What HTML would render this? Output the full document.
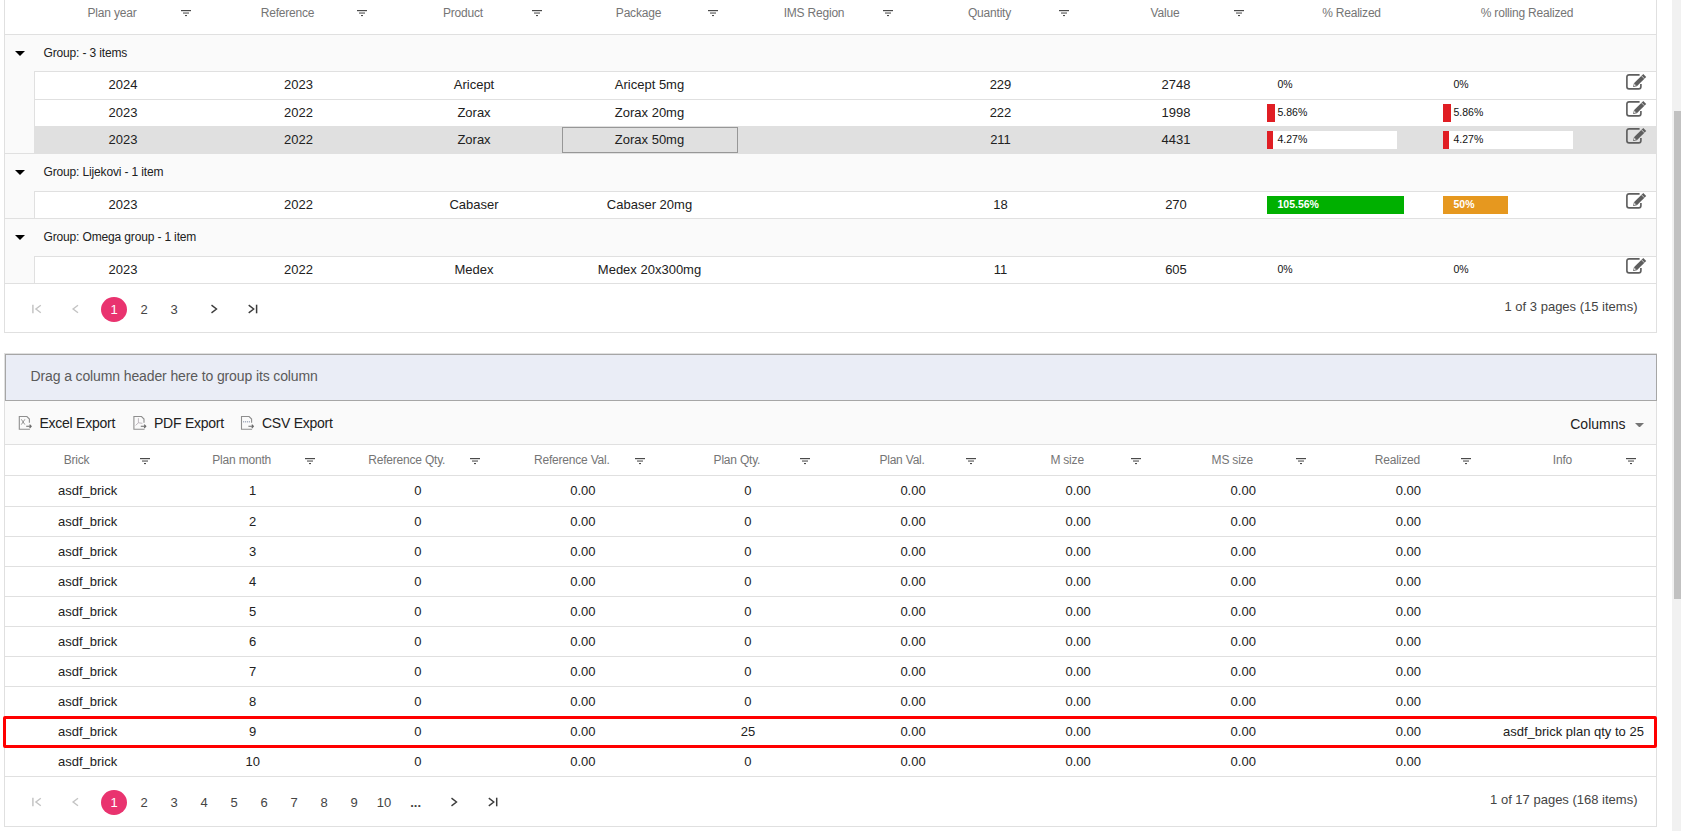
<!DOCTYPE html>
<html><head><meta charset="utf-8"><style>
html,body{margin:0;padding:0;background:#fff;}
body{width:1681px;height:831px;overflow:hidden;position:relative;font-family:"Liberation Sans", sans-serif;}
body>div,body>svg{position:absolute;}
.t{white-space:nowrap;}
</style></head><body>
<div style="left:4px;top:0px;width:1px;height:333px;background:#e0e0e0;"></div>
<div style="left:1656px;top:0px;width:1px;height:333px;background:#e0e0e0;"></div>
<div style="left:4px;top:332px;width:1653px;height:1px;background:#e0e0e0;"></div>
<div style="left:5px;top:34px;width:1651px;height:1px;background:#e0e0e0;"></div>
<div class="t" style="left:-88.00px;width:400px;text-align:center;top:0.84px;font-size:12px;line-height:24px;color:#757575;font-weight:normal;letter-spacing:-0.2px">Plan year</div>
<svg style="left:181.0px;top:10px" width="10" height="7" viewBox="0 0 10 7"><rect x="0" y="0" width="10" height="1.2" fill="#4a4a4a"/><rect x="2" y="2.4" width="6" height="1.3" fill="#6e6e6e"/><rect x="4" y="5" width="2" height="1.1" fill="#4a4a4a"/></svg>
<div class="t" style="left:87.50px;width:400px;text-align:center;top:0.84px;font-size:12px;line-height:24px;color:#757575;font-weight:normal;letter-spacing:-0.2px">Reference</div>
<svg style="left:356.5px;top:10px" width="10" height="7" viewBox="0 0 10 7"><rect x="0" y="0" width="10" height="1.2" fill="#4a4a4a"/><rect x="2" y="2.4" width="6" height="1.3" fill="#6e6e6e"/><rect x="4" y="5" width="2" height="1.1" fill="#4a4a4a"/></svg>
<div class="t" style="left:263.00px;width:400px;text-align:center;top:0.84px;font-size:12px;line-height:24px;color:#757575;font-weight:normal;letter-spacing:-0.2px">Product</div>
<svg style="left:532.0px;top:10px" width="10" height="7" viewBox="0 0 10 7"><rect x="0" y="0" width="10" height="1.2" fill="#4a4a4a"/><rect x="2" y="2.4" width="6" height="1.3" fill="#6e6e6e"/><rect x="4" y="5" width="2" height="1.1" fill="#4a4a4a"/></svg>
<div class="t" style="left:438.50px;width:400px;text-align:center;top:0.84px;font-size:12px;line-height:24px;color:#757575;font-weight:normal;letter-spacing:-0.2px">Package</div>
<svg style="left:707.5px;top:10px" width="10" height="7" viewBox="0 0 10 7"><rect x="0" y="0" width="10" height="1.2" fill="#4a4a4a"/><rect x="2" y="2.4" width="6" height="1.3" fill="#6e6e6e"/><rect x="4" y="5" width="2" height="1.1" fill="#4a4a4a"/></svg>
<div class="t" style="left:614.00px;width:400px;text-align:center;top:0.84px;font-size:12px;line-height:24px;color:#757575;font-weight:normal;letter-spacing:-0.2px">IMS Region</div>
<svg style="left:883.0px;top:10px" width="10" height="7" viewBox="0 0 10 7"><rect x="0" y="0" width="10" height="1.2" fill="#4a4a4a"/><rect x="2" y="2.4" width="6" height="1.3" fill="#6e6e6e"/><rect x="4" y="5" width="2" height="1.1" fill="#4a4a4a"/></svg>
<div class="t" style="left:789.50px;width:400px;text-align:center;top:0.84px;font-size:12px;line-height:24px;color:#757575;font-weight:normal;letter-spacing:-0.2px">Quantity</div>
<svg style="left:1058.5px;top:10px" width="10" height="7" viewBox="0 0 10 7"><rect x="0" y="0" width="10" height="1.2" fill="#4a4a4a"/><rect x="2" y="2.4" width="6" height="1.3" fill="#6e6e6e"/><rect x="4" y="5" width="2" height="1.1" fill="#4a4a4a"/></svg>
<div class="t" style="left:965.00px;width:400px;text-align:center;top:0.84px;font-size:12px;line-height:24px;color:#757575;font-weight:normal;letter-spacing:-0.2px">Value</div>
<svg style="left:1234.0px;top:10px" width="10" height="7" viewBox="0 0 10 7"><rect x="0" y="0" width="10" height="1.2" fill="#4a4a4a"/><rect x="2" y="2.4" width="6" height="1.3" fill="#6e6e6e"/><rect x="4" y="5" width="2" height="1.1" fill="#4a4a4a"/></svg>
<div class="t" style="left:1151.50px;width:400px;text-align:center;top:0.84px;font-size:12px;line-height:24px;color:#757575;font-weight:normal;letter-spacing:-0.2px">% Realized</div>
<div class="t" style="left:1327.00px;width:400px;text-align:center;top:0.84px;font-size:12px;line-height:24px;color:#757575;font-weight:normal;letter-spacing:-0.2px">% rolling Realized</div>
<div style="left:5px;top:35px;width:1651px;height:36px;background:#fafafa;"></div>
<svg style="left:15px;top:50.5px" width="10" height="5" viewBox="0 0 10 5"><path d="M0 0 L10 0 L5.0 5 Z" fill="#000"/></svg>
<div class="t" style="left:43.50px;top:40.84px;font-size:12px;line-height:24px;color:#212121;font-weight:normal;letter-spacing:-0.15px">Group: - 3 items</div>
<div style="left:5px;top:154px;width:1651px;height:37px;background:#fafafa;"></div>
<svg style="left:15px;top:169.5px" width="10" height="5" viewBox="0 0 10 5"><path d="M0 0 L10 0 L5.0 5 Z" fill="#000"/></svg>
<div class="t" style="left:43.50px;top:159.84px;font-size:12px;line-height:24px;color:#212121;font-weight:normal;letter-spacing:-0.15px">Group: Lijekovi - 1 item</div>
<div style="left:5px;top:219px;width:1651px;height:37px;background:#fafafa;"></div>
<svg style="left:15px;top:234.5px" width="10" height="5" viewBox="0 0 10 5"><path d="M0 0 L10 0 L5.0 5 Z" fill="#000"/></svg>
<div class="t" style="left:43.50px;top:224.84px;font-size:12px;line-height:24px;color:#212121;font-weight:normal;letter-spacing:-0.15px">Group: Omega group - 1 item</div>
<div style="left:5px;top:153px;width:1651px;height:1px;background:#e0e0e0;"></div>
<div style="left:5px;top:218px;width:1651px;height:1px;background:#e0e0e0;"></div>
<div style="left:5px;top:71px;width:29px;height:28px;background:#fafafa;"></div>
<div style="left:35px;top:72px;width:1621px;height:27px;background:#fff;"></div>
<div style="left:34px;top:71px;width:1622px;height:1px;background:#e0e0e0;"></div>
<div style="left:34px;top:71px;width:1px;height:28px;background:#e0e0e0;"></div>
<div class="t" style="left:-77.00px;width:400px;text-align:center;top:71.50px;font-size:13px;line-height:26px;color:#212121;font-weight:normal;">2024</div>
<div class="t" style="left:98.50px;width:400px;text-align:center;top:71.50px;font-size:13px;line-height:26px;color:#212121;font-weight:normal;">2023</div>
<div class="t" style="left:274.00px;width:400px;text-align:center;top:71.50px;font-size:13px;line-height:26px;color:#212121;font-weight:normal;">Aricept</div>
<div class="t" style="left:449.50px;width:400px;text-align:center;top:71.50px;font-size:13px;line-height:26px;color:#212121;font-weight:normal;">Aricept 5mg</div>
<div class="t" style="left:800.50px;width:400px;text-align:center;top:71.50px;font-size:13px;line-height:26px;color:#212121;font-weight:normal;">229</div>
<div class="t" style="left:976.00px;width:400px;text-align:center;top:71.50px;font-size:13px;line-height:26px;color:#212121;font-weight:normal;">2748</div>
<div style="left:1267px;top:76px;width:130px;height:18px;background:#fff;"></div>
<div class="t" style="left:1277.50px;top:73.86px;font-size:10.5px;line-height:21.0px;color:#111;font-weight:normal;">0%</div>
<div style="left:1443px;top:76px;width:130px;height:18px;background:#fff;"></div>
<div class="t" style="left:1453.50px;top:73.86px;font-size:10.5px;line-height:21.0px;color:#111;font-weight:normal;">0%</div>
<svg style="left:1622px;top:71.1px" width="27" height="21" viewBox="0 0 27 21"><path d="M17.6 3.8 H7.1 A2.2 2.2 0 0 0 4.9 6 V15.7 A2.2 2.2 0 0 0 7.1 17.9 H16.7 A2.2 2.2 0 0 0 18.9 15.7 V13" fill="none" stroke="#5e5e5e" stroke-width="1.65"/><path d="M11.93 12.16 L21.3 3.0 L24.2 6.0 L14.87 15.16 Z" fill="#5e5e5e"/><path d="M11.1 15.9 L11.93 12.16 L14.87 15.16 Z" fill="#5e5e5e"/><path d="M11.9 15.0 L12.4 13.1 L13.8 14.5 Z" fill="#fff"/><path d="M19.5 4.8 L22.4 7.75" stroke="#fff" stroke-width="0.7"/></svg>
<div style="left:5px;top:99px;width:29px;height:27px;background:#fafafa;"></div>
<div style="left:35px;top:100px;width:1621px;height:26px;background:#fff;"></div>
<div style="left:34px;top:99px;width:1622px;height:1px;background:#e0e0e0;"></div>
<div style="left:34px;top:99px;width:1px;height:27px;background:#e0e0e0;"></div>
<div class="t" style="left:-77.00px;width:400px;text-align:center;top:99.50px;font-size:13px;line-height:26px;color:#212121;font-weight:normal;">2023</div>
<div class="t" style="left:98.50px;width:400px;text-align:center;top:99.50px;font-size:13px;line-height:26px;color:#212121;font-weight:normal;">2022</div>
<div class="t" style="left:274.00px;width:400px;text-align:center;top:99.50px;font-size:13px;line-height:26px;color:#212121;font-weight:normal;">Zorax</div>
<div class="t" style="left:449.50px;width:400px;text-align:center;top:99.50px;font-size:13px;line-height:26px;color:#212121;font-weight:normal;">Zorax 20mg</div>
<div class="t" style="left:800.50px;width:400px;text-align:center;top:99.50px;font-size:13px;line-height:26px;color:#212121;font-weight:normal;">222</div>
<div class="t" style="left:976.00px;width:400px;text-align:center;top:99.50px;font-size:13px;line-height:26px;color:#212121;font-weight:normal;">1998</div>
<div style="left:1267px;top:104px;width:130px;height:18px;background:#fff;"></div>
<div style="left:1267px;top:104px;width:7.62px;height:18px;background:#e01e24;"></div>
<div class="t" style="left:1277.50px;top:101.86px;font-size:10.5px;line-height:21.0px;color:#111;font-weight:normal;">5.86%</div>
<div style="left:1443px;top:104px;width:130px;height:18px;background:#fff;"></div>
<div style="left:1443px;top:104px;width:7.62px;height:18px;background:#e01e24;"></div>
<div class="t" style="left:1453.50px;top:101.86px;font-size:10.5px;line-height:21.0px;color:#111;font-weight:normal;">5.86%</div>
<svg style="left:1622px;top:98.1px" width="27" height="21" viewBox="0 0 27 21"><path d="M17.6 3.8 H7.1 A2.2 2.2 0 0 0 4.9 6 V15.7 A2.2 2.2 0 0 0 7.1 17.9 H16.7 A2.2 2.2 0 0 0 18.9 15.7 V13" fill="none" stroke="#5e5e5e" stroke-width="1.65"/><path d="M11.93 12.16 L21.3 3.0 L24.2 6.0 L14.87 15.16 Z" fill="#5e5e5e"/><path d="M11.1 15.9 L11.93 12.16 L14.87 15.16 Z" fill="#5e5e5e"/><path d="M11.9 15.0 L12.4 13.1 L13.8 14.5 Z" fill="#fff"/><path d="M19.5 4.8 L22.4 7.75" stroke="#fff" stroke-width="0.7"/></svg>
<div style="left:5px;top:125px;width:29px;height:28px;background:#fafafa;"></div>
<div style="left:35px;top:126px;width:1621px;height:27px;background:#e0e0e0;"></div>
<div style="left:34px;top:125px;width:1px;height:28px;background:#e0e0e0;"></div>
<div class="t" style="left:-77.00px;width:400px;text-align:center;top:126.50px;font-size:13px;line-height:26px;color:#212121;font-weight:normal;">2023</div>
<div class="t" style="left:98.50px;width:400px;text-align:center;top:126.50px;font-size:13px;line-height:26px;color:#212121;font-weight:normal;">2022</div>
<div class="t" style="left:274.00px;width:400px;text-align:center;top:126.50px;font-size:13px;line-height:26px;color:#212121;font-weight:normal;">Zorax</div>
<div class="t" style="left:449.50px;width:400px;text-align:center;top:126.50px;font-size:13px;line-height:26px;color:#212121;font-weight:normal;">Zorax 50mg</div>
<div class="t" style="left:800.50px;width:400px;text-align:center;top:126.50px;font-size:13px;line-height:26px;color:#212121;font-weight:normal;">211</div>
<div class="t" style="left:976.00px;width:400px;text-align:center;top:126.50px;font-size:13px;line-height:26px;color:#212121;font-weight:normal;">4431</div>
<div style="left:562px;top:127px;width:174px;height:24px;border:1px solid #979797;"></div>
<div style="left:1267px;top:131px;width:130px;height:18px;background:#fff;"></div>
<div style="left:1267px;top:131px;width:5.55px;height:18px;background:#e01e24;"></div>
<div class="t" style="left:1277.50px;top:128.86px;font-size:10.5px;line-height:21.0px;color:#111;font-weight:normal;">4.27%</div>
<div style="left:1443px;top:131px;width:130px;height:18px;background:#fff;"></div>
<div style="left:1443px;top:131px;width:5.55px;height:18px;background:#e01e24;"></div>
<div class="t" style="left:1453.50px;top:128.86px;font-size:10.5px;line-height:21.0px;color:#111;font-weight:normal;">4.27%</div>
<svg style="left:1622px;top:125.1px" width="27" height="21" viewBox="0 0 27 21"><path d="M17.6 3.8 H7.1 A2.2 2.2 0 0 0 4.9 6 V15.7 A2.2 2.2 0 0 0 7.1 17.9 H16.7 A2.2 2.2 0 0 0 18.9 15.7 V13" fill="none" stroke="#5e5e5e" stroke-width="1.65"/><path d="M11.93 12.16 L21.3 3.0 L24.2 6.0 L14.87 15.16 Z" fill="#5e5e5e"/><path d="M11.1 15.9 L11.93 12.16 L14.87 15.16 Z" fill="#5e5e5e"/><path d="M11.9 15.0 L12.4 13.1 L13.8 14.5 Z" fill="#fff"/><path d="M19.5 4.8 L22.4 7.75" stroke="#fff" stroke-width="0.7"/></svg>
<div style="left:5px;top:191px;width:29px;height:27px;background:#fafafa;"></div>
<div style="left:35px;top:192px;width:1621px;height:26px;background:#fff;"></div>
<div style="left:34px;top:191px;width:1622px;height:1px;background:#e0e0e0;"></div>
<div style="left:34px;top:191px;width:1px;height:27px;background:#e0e0e0;"></div>
<div class="t" style="left:-77.00px;width:400px;text-align:center;top:191.50px;font-size:13px;line-height:26px;color:#212121;font-weight:normal;">2023</div>
<div class="t" style="left:98.50px;width:400px;text-align:center;top:191.50px;font-size:13px;line-height:26px;color:#212121;font-weight:normal;">2022</div>
<div class="t" style="left:274.00px;width:400px;text-align:center;top:191.50px;font-size:13px;line-height:26px;color:#212121;font-weight:normal;">Cabaser</div>
<div class="t" style="left:449.50px;width:400px;text-align:center;top:191.50px;font-size:13px;line-height:26px;color:#212121;font-weight:normal;">Cabaser 20mg</div>
<div class="t" style="left:800.50px;width:400px;text-align:center;top:191.50px;font-size:13px;line-height:26px;color:#212121;font-weight:normal;">18</div>
<div class="t" style="left:976.00px;width:400px;text-align:center;top:191.50px;font-size:13px;line-height:26px;color:#212121;font-weight:normal;">270</div>
<div style="left:1267px;top:196px;width:130px;height:18px;background:#fff;"></div>
<div style="left:1267px;top:196px;width:137.23px;height:18px;background:#00b000;"></div>
<div class="t" style="left:1277.50px;top:193.86px;font-size:10.5px;line-height:21.0px;color:#fff;font-weight:bold;">105.56%</div>
<div style="left:1443px;top:196px;width:130px;height:18px;background:#fff;"></div>
<div style="left:1443px;top:196px;width:65.0px;height:18px;background:#e6981f;"></div>
<div class="t" style="left:1453.50px;top:193.86px;font-size:10.5px;line-height:21.0px;color:#fff;font-weight:bold;">50%</div>
<svg style="left:1622px;top:190.1px" width="27" height="21" viewBox="0 0 27 21"><path d="M17.6 3.8 H7.1 A2.2 2.2 0 0 0 4.9 6 V15.7 A2.2 2.2 0 0 0 7.1 17.9 H16.7 A2.2 2.2 0 0 0 18.9 15.7 V13" fill="none" stroke="#5e5e5e" stroke-width="1.65"/><path d="M11.93 12.16 L21.3 3.0 L24.2 6.0 L14.87 15.16 Z" fill="#5e5e5e"/><path d="M11.1 15.9 L11.93 12.16 L14.87 15.16 Z" fill="#5e5e5e"/><path d="M11.9 15.0 L12.4 13.1 L13.8 14.5 Z" fill="#fff"/><path d="M19.5 4.8 L22.4 7.75" stroke="#fff" stroke-width="0.7"/></svg>
<div style="left:5px;top:256px;width:29px;height:27px;background:#fafafa;"></div>
<div style="left:35px;top:257px;width:1621px;height:26px;background:#fff;"></div>
<div style="left:34px;top:256px;width:1622px;height:1px;background:#e0e0e0;"></div>
<div style="left:34px;top:256px;width:1px;height:27px;background:#e0e0e0;"></div>
<div class="t" style="left:-77.00px;width:400px;text-align:center;top:256.50px;font-size:13px;line-height:26px;color:#212121;font-weight:normal;">2023</div>
<div class="t" style="left:98.50px;width:400px;text-align:center;top:256.50px;font-size:13px;line-height:26px;color:#212121;font-weight:normal;">2022</div>
<div class="t" style="left:274.00px;width:400px;text-align:center;top:256.50px;font-size:13px;line-height:26px;color:#212121;font-weight:normal;">Medex</div>
<div class="t" style="left:449.50px;width:400px;text-align:center;top:256.50px;font-size:13px;line-height:26px;color:#212121;font-weight:normal;">Medex 20x300mg</div>
<div class="t" style="left:800.50px;width:400px;text-align:center;top:256.50px;font-size:13px;line-height:26px;color:#212121;font-weight:normal;">11</div>
<div class="t" style="left:976.00px;width:400px;text-align:center;top:256.50px;font-size:13px;line-height:26px;color:#212121;font-weight:normal;">605</div>
<div style="left:1267px;top:261px;width:130px;height:18px;background:#fff;"></div>
<div class="t" style="left:1277.50px;top:258.86px;font-size:10.5px;line-height:21.0px;color:#111;font-weight:normal;">0%</div>
<div style="left:1443px;top:261px;width:130px;height:18px;background:#fff;"></div>
<div class="t" style="left:1453.50px;top:258.86px;font-size:10.5px;line-height:21.0px;color:#111;font-weight:normal;">0%</div>
<svg style="left:1622px;top:255.1px" width="27" height="21" viewBox="0 0 27 21"><path d="M17.6 3.8 H7.1 A2.2 2.2 0 0 0 4.9 6 V15.7 A2.2 2.2 0 0 0 7.1 17.9 H16.7 A2.2 2.2 0 0 0 18.9 15.7 V13" fill="none" stroke="#5e5e5e" stroke-width="1.65"/><path d="M11.93 12.16 L21.3 3.0 L24.2 6.0 L14.87 15.16 Z" fill="#5e5e5e"/><path d="M11.1 15.9 L11.93 12.16 L14.87 15.16 Z" fill="#5e5e5e"/><path d="M11.9 15.0 L12.4 13.1 L13.8 14.5 Z" fill="#fff"/><path d="M19.5 4.8 L22.4 7.75" stroke="#fff" stroke-width="0.7"/></svg>
<div style="left:5px;top:283px;width:1651px;height:1px;background:#e0e0e0;"></div>
<svg style="left:0px;top:303.4px" width="300" height="12" viewBox="0 0 300 12"><path d="M32.9 1.7999999999999998 V10.2" stroke="#c4c4c4" stroke-width="1.5"/><path d="M40.8 2.2 L35.9 6 L40.8 9.8" fill="none" stroke="#c4c4c4" stroke-width="1.4"/><path d="M78 2.2 L73.1 6 L78 9.8" fill="none" stroke="#c4c4c4" stroke-width="1.4"/></svg>
<svg style="left:203.5px;top:303.4px" width="60" height="12" viewBox="0 0 60 12"><path d="M7.5 2.1 L12.5 6 L7.5 9.9" fill="none" stroke="#3c3c3c" stroke-width="1.4"/><path d="M44.699999999999996 2.1 L49.699999999999996 6 L44.699999999999996 9.9" fill="none" stroke="#3c3c3c" stroke-width="1.4"/><path d="M52.599999999999994 1.7000000000000002 V10.3" stroke="#3c3c3c" stroke-width="1.5"/></svg>
<div style="left:101px;top:296.7px;width:26px;height:25.4px;border-radius:50%;background:#e9336f"></div>
<div class="t" style="left:-86.00px;width:400px;text-align:center;top:296.60px;font-size:13px;line-height:26px;color:#fff;font-weight:normal;">1</div>
<div class="t" style="left:-56.00px;width:400px;text-align:center;top:296.60px;font-size:13px;line-height:26px;color:#444;font-weight:normal;">2</div>
<div class="t" style="left:-26.00px;width:400px;text-align:center;top:296.60px;font-size:13px;line-height:26px;color:#444;font-weight:normal;">3</div>
<div class="t" style="left:1237.50px;width:400px;text-align:right;top:293.90px;font-size:13px;line-height:26px;color:#444;font-weight:normal;">1 of 3 pages (15 items)</div>
<div style="left:4px;top:353px;width:1px;height:474px;background:#e0e0e0;"></div>
<div style="left:1656px;top:353px;width:1px;height:474px;background:#e0e0e0;"></div>
<div style="left:4px;top:353px;width:1653px;height:1px;background:#e0e0e0;"></div>
<div style="left:4px;top:826px;width:1653px;height:1px;background:#e0e0e0;"></div>
<div style="left:5px;top:354px;width:1652px;height:47px;background:#eaedf6;box-sizing:border-box;border:1px solid #a6a6a6;"></div>
<div class="t" style="left:30.50px;top:362.15px;font-size:14px;line-height:28px;color:#5a5a5a;font-weight:normal;letter-spacing:-0.12px">Drag a column header here to group its column</div>
<div style="left:5px;top:401px;width:1651px;height:43px;background:#fafafa;"></div>
<div style="left:5px;top:444px;width:1651px;height:1px;background:#e0e0e0;"></div>
<svg style="left:14px;top:412px" width="22" height="22" viewBox="0 0 22 22"><path d="M5.3 4.5 H12.9 L15.4 7 V10.8 M5.3 4 V17.8 M4.8 17.3 H15.9" fill="none" stroke="#8e8e8e" stroke-width="1.1"/><path d="M12.2 14.3 H17.0 M15.6 12.6 L17.2 14.3 L15.6 16" fill="none" stroke="#6a6a6a" stroke-width="1.1"/><path d="M7.3 7.3 L10.9 12.6 M10.9 7.3 L7.3 12.6" stroke="#8a8a8a" stroke-width="0.9"/></svg>
<svg style="left:128px;top:412px" width="22" height="22" viewBox="0 0 22 22"><path d="M5.8999999999999995 4.5 H13.5 L16.0 7 V10.8 M5.8999999999999995 4 V17.8 M5.3999999999999995 17.3 H16.5" fill="none" stroke="#8e8e8e" stroke-width="1.1"/><path d="M12.799999999999999 14.3 H17.6 M16.2 12.6 L17.8 14.3 L16.2 16" fill="none" stroke="#6a6a6a" stroke-width="1.1"/><path d="M10.4 6.2 V10.8 L7.6 13.4 M10.4 10.8 L14.4 11.3" fill="none" stroke="#b0a8b0" stroke-width="0.8"/></svg>
<svg style="left:236px;top:412px" width="22" height="22" viewBox="0 0 22 22"><path d="M5.5 4.5 H13.1 L15.6 7 V10.8 M5.5 4 V17.8 M5.0 17.3 H16.1" fill="none" stroke="#8e8e8e" stroke-width="1.1"/><path d="M12.399999999999999 14.3 H17.2 M15.799999999999999 12.6 L17.4 14.3 L15.799999999999999 16" fill="none" stroke="#6a6a6a" stroke-width="1.1"/><path d="M7 9.8 H14" stroke="#a8b0c0" stroke-width="1.6" stroke-dasharray="1.2 0.8"/></svg>
<div class="t" style="left:39.50px;top:409.15px;font-size:14px;line-height:28px;color:#212121;font-weight:normal;letter-spacing:-0.25px">Excel Export</div>
<div class="t" style="left:154.00px;top:409.15px;font-size:14px;line-height:28px;color:#212121;font-weight:normal;letter-spacing:-0.25px">PDF Export</div>
<div class="t" style="left:262.00px;top:409.15px;font-size:14px;line-height:28px;color:#212121;font-weight:normal;letter-spacing:-0.25px">CSV Export</div>
<div class="t" style="left:1225.50px;width:400px;text-align:right;top:410.15px;font-size:14px;line-height:28px;color:#212121;font-weight:normal;">Columns</div>
<svg style="left:1635px;top:422.5px" width="9" height="4.5" viewBox="0 0 9 4.5"><path d="M0 0 L9 0 L4.5 4.5 Z" fill="#757575"/></svg>
<div class="t" style="left:-123.45px;width:400px;text-align:center;top:447.84px;font-size:12px;line-height:24px;color:#757575;font-weight:normal;letter-spacing:-0.2px">Brick</div>
<svg style="left:140.05px;top:458px" width="10" height="7" viewBox="0 0 10 7"><rect x="0" y="0" width="10" height="1.2" fill="#4a4a4a"/><rect x="2" y="2.4" width="6" height="1.3" fill="#6e6e6e"/><rect x="4" y="5" width="2" height="1.1" fill="#4a4a4a"/></svg>
<div class="t" style="left:41.65px;width:400px;text-align:center;top:447.84px;font-size:12px;line-height:24px;color:#757575;font-weight:normal;letter-spacing:-0.2px">Plan month</div>
<svg style="left:305.15px;top:458px" width="10" height="7" viewBox="0 0 10 7"><rect x="0" y="0" width="10" height="1.2" fill="#4a4a4a"/><rect x="2" y="2.4" width="6" height="1.3" fill="#6e6e6e"/><rect x="4" y="5" width="2" height="1.1" fill="#4a4a4a"/></svg>
<div class="t" style="left:206.75px;width:400px;text-align:center;top:447.84px;font-size:12px;line-height:24px;color:#757575;font-weight:normal;letter-spacing:-0.2px">Reference Qty.</div>
<svg style="left:470.25px;top:458px" width="10" height="7" viewBox="0 0 10 7"><rect x="0" y="0" width="10" height="1.2" fill="#4a4a4a"/><rect x="2" y="2.4" width="6" height="1.3" fill="#6e6e6e"/><rect x="4" y="5" width="2" height="1.1" fill="#4a4a4a"/></svg>
<div class="t" style="left:371.85px;width:400px;text-align:center;top:447.84px;font-size:12px;line-height:24px;color:#757575;font-weight:normal;letter-spacing:-0.2px">Reference Val.</div>
<svg style="left:635.35px;top:458px" width="10" height="7" viewBox="0 0 10 7"><rect x="0" y="0" width="10" height="1.2" fill="#4a4a4a"/><rect x="2" y="2.4" width="6" height="1.3" fill="#6e6e6e"/><rect x="4" y="5" width="2" height="1.1" fill="#4a4a4a"/></svg>
<div class="t" style="left:536.95px;width:400px;text-align:center;top:447.84px;font-size:12px;line-height:24px;color:#757575;font-weight:normal;letter-spacing:-0.2px">Plan Qty.</div>
<svg style="left:800.4499999999999px;top:458px" width="10" height="7" viewBox="0 0 10 7"><rect x="0" y="0" width="10" height="1.2" fill="#4a4a4a"/><rect x="2" y="2.4" width="6" height="1.3" fill="#6e6e6e"/><rect x="4" y="5" width="2" height="1.1" fill="#4a4a4a"/></svg>
<div class="t" style="left:702.05px;width:400px;text-align:center;top:447.84px;font-size:12px;line-height:24px;color:#757575;font-weight:normal;letter-spacing:-0.2px">Plan Val.</div>
<svg style="left:965.55px;top:458px" width="10" height="7" viewBox="0 0 10 7"><rect x="0" y="0" width="10" height="1.2" fill="#4a4a4a"/><rect x="2" y="2.4" width="6" height="1.3" fill="#6e6e6e"/><rect x="4" y="5" width="2" height="1.1" fill="#4a4a4a"/></svg>
<div class="t" style="left:867.15px;width:400px;text-align:center;top:447.84px;font-size:12px;line-height:24px;color:#757575;font-weight:normal;letter-spacing:-0.2px">M size</div>
<svg style="left:1130.6499999999999px;top:458px" width="10" height="7" viewBox="0 0 10 7"><rect x="0" y="0" width="10" height="1.2" fill="#4a4a4a"/><rect x="2" y="2.4" width="6" height="1.3" fill="#6e6e6e"/><rect x="4" y="5" width="2" height="1.1" fill="#4a4a4a"/></svg>
<div class="t" style="left:1032.25px;width:400px;text-align:center;top:447.84px;font-size:12px;line-height:24px;color:#757575;font-weight:normal;letter-spacing:-0.2px">MS size</div>
<svg style="left:1295.75px;top:458px" width="10" height="7" viewBox="0 0 10 7"><rect x="0" y="0" width="10" height="1.2" fill="#4a4a4a"/><rect x="2" y="2.4" width="6" height="1.3" fill="#6e6e6e"/><rect x="4" y="5" width="2" height="1.1" fill="#4a4a4a"/></svg>
<div class="t" style="left:1197.35px;width:400px;text-align:center;top:447.84px;font-size:12px;line-height:24px;color:#757575;font-weight:normal;letter-spacing:-0.2px">Realized</div>
<svg style="left:1460.85px;top:458px" width="10" height="7" viewBox="0 0 10 7"><rect x="0" y="0" width="10" height="1.2" fill="#4a4a4a"/><rect x="2" y="2.4" width="6" height="1.3" fill="#6e6e6e"/><rect x="4" y="5" width="2" height="1.1" fill="#4a4a4a"/></svg>
<div class="t" style="left:1362.45px;width:400px;text-align:center;top:447.84px;font-size:12px;line-height:24px;color:#757575;font-weight:normal;letter-spacing:-0.2px">Info</div>
<svg style="left:1625.95px;top:458px" width="10" height="7" viewBox="0 0 10 7"><rect x="0" y="0" width="10" height="1.2" fill="#4a4a4a"/><rect x="2" y="2.4" width="6" height="1.3" fill="#6e6e6e"/><rect x="4" y="5" width="2" height="1.1" fill="#4a4a4a"/></svg>
<div style="left:5px;top:475px;width:1651px;height:1px;background:#e0e0e0;"></div>
<div class="t" style="left:-112.45px;width:400px;text-align:center;top:477.50px;font-size:13px;line-height:26px;color:#212121;font-weight:normal;">asdf_brick</div>
<div class="t" style="left:52.65px;width:400px;text-align:center;top:477.50px;font-size:13px;line-height:26px;color:#212121;font-weight:normal;">1</div>
<div class="t" style="left:217.75px;width:400px;text-align:center;top:477.50px;font-size:13px;line-height:26px;color:#212121;font-weight:normal;">0</div>
<div class="t" style="left:382.85px;width:400px;text-align:center;top:477.50px;font-size:13px;line-height:26px;color:#212121;font-weight:normal;">0.00</div>
<div class="t" style="left:547.95px;width:400px;text-align:center;top:477.50px;font-size:13px;line-height:26px;color:#212121;font-weight:normal;">0</div>
<div class="t" style="left:713.05px;width:400px;text-align:center;top:477.50px;font-size:13px;line-height:26px;color:#212121;font-weight:normal;">0.00</div>
<div class="t" style="left:878.15px;width:400px;text-align:center;top:477.50px;font-size:13px;line-height:26px;color:#212121;font-weight:normal;">0.00</div>
<div class="t" style="left:1043.25px;width:400px;text-align:center;top:477.50px;font-size:13px;line-height:26px;color:#212121;font-weight:normal;">0.00</div>
<div class="t" style="left:1208.35px;width:400px;text-align:center;top:477.50px;font-size:13px;line-height:26px;color:#212121;font-weight:normal;">0.00</div>
<div style="left:5px;top:506px;width:1651px;height:1px;background:#e0e0e0;"></div>
<div class="t" style="left:-112.45px;width:400px;text-align:center;top:508.50px;font-size:13px;line-height:26px;color:#212121;font-weight:normal;">asdf_brick</div>
<div class="t" style="left:52.65px;width:400px;text-align:center;top:508.50px;font-size:13px;line-height:26px;color:#212121;font-weight:normal;">2</div>
<div class="t" style="left:217.75px;width:400px;text-align:center;top:508.50px;font-size:13px;line-height:26px;color:#212121;font-weight:normal;">0</div>
<div class="t" style="left:382.85px;width:400px;text-align:center;top:508.50px;font-size:13px;line-height:26px;color:#212121;font-weight:normal;">0.00</div>
<div class="t" style="left:547.95px;width:400px;text-align:center;top:508.50px;font-size:13px;line-height:26px;color:#212121;font-weight:normal;">0</div>
<div class="t" style="left:713.05px;width:400px;text-align:center;top:508.50px;font-size:13px;line-height:26px;color:#212121;font-weight:normal;">0.00</div>
<div class="t" style="left:878.15px;width:400px;text-align:center;top:508.50px;font-size:13px;line-height:26px;color:#212121;font-weight:normal;">0.00</div>
<div class="t" style="left:1043.25px;width:400px;text-align:center;top:508.50px;font-size:13px;line-height:26px;color:#212121;font-weight:normal;">0.00</div>
<div class="t" style="left:1208.35px;width:400px;text-align:center;top:508.50px;font-size:13px;line-height:26px;color:#212121;font-weight:normal;">0.00</div>
<div style="left:5px;top:536px;width:1651px;height:1px;background:#e0e0e0;"></div>
<div class="t" style="left:-112.45px;width:400px;text-align:center;top:538.50px;font-size:13px;line-height:26px;color:#212121;font-weight:normal;">asdf_brick</div>
<div class="t" style="left:52.65px;width:400px;text-align:center;top:538.50px;font-size:13px;line-height:26px;color:#212121;font-weight:normal;">3</div>
<div class="t" style="left:217.75px;width:400px;text-align:center;top:538.50px;font-size:13px;line-height:26px;color:#212121;font-weight:normal;">0</div>
<div class="t" style="left:382.85px;width:400px;text-align:center;top:538.50px;font-size:13px;line-height:26px;color:#212121;font-weight:normal;">0.00</div>
<div class="t" style="left:547.95px;width:400px;text-align:center;top:538.50px;font-size:13px;line-height:26px;color:#212121;font-weight:normal;">0</div>
<div class="t" style="left:713.05px;width:400px;text-align:center;top:538.50px;font-size:13px;line-height:26px;color:#212121;font-weight:normal;">0.00</div>
<div class="t" style="left:878.15px;width:400px;text-align:center;top:538.50px;font-size:13px;line-height:26px;color:#212121;font-weight:normal;">0.00</div>
<div class="t" style="left:1043.25px;width:400px;text-align:center;top:538.50px;font-size:13px;line-height:26px;color:#212121;font-weight:normal;">0.00</div>
<div class="t" style="left:1208.35px;width:400px;text-align:center;top:538.50px;font-size:13px;line-height:26px;color:#212121;font-weight:normal;">0.00</div>
<div style="left:5px;top:566px;width:1651px;height:1px;background:#e0e0e0;"></div>
<div class="t" style="left:-112.45px;width:400px;text-align:center;top:568.50px;font-size:13px;line-height:26px;color:#212121;font-weight:normal;">asdf_brick</div>
<div class="t" style="left:52.65px;width:400px;text-align:center;top:568.50px;font-size:13px;line-height:26px;color:#212121;font-weight:normal;">4</div>
<div class="t" style="left:217.75px;width:400px;text-align:center;top:568.50px;font-size:13px;line-height:26px;color:#212121;font-weight:normal;">0</div>
<div class="t" style="left:382.85px;width:400px;text-align:center;top:568.50px;font-size:13px;line-height:26px;color:#212121;font-weight:normal;">0.00</div>
<div class="t" style="left:547.95px;width:400px;text-align:center;top:568.50px;font-size:13px;line-height:26px;color:#212121;font-weight:normal;">0</div>
<div class="t" style="left:713.05px;width:400px;text-align:center;top:568.50px;font-size:13px;line-height:26px;color:#212121;font-weight:normal;">0.00</div>
<div class="t" style="left:878.15px;width:400px;text-align:center;top:568.50px;font-size:13px;line-height:26px;color:#212121;font-weight:normal;">0.00</div>
<div class="t" style="left:1043.25px;width:400px;text-align:center;top:568.50px;font-size:13px;line-height:26px;color:#212121;font-weight:normal;">0.00</div>
<div class="t" style="left:1208.35px;width:400px;text-align:center;top:568.50px;font-size:13px;line-height:26px;color:#212121;font-weight:normal;">0.00</div>
<div style="left:5px;top:596px;width:1651px;height:1px;background:#e0e0e0;"></div>
<div class="t" style="left:-112.45px;width:400px;text-align:center;top:598.50px;font-size:13px;line-height:26px;color:#212121;font-weight:normal;">asdf_brick</div>
<div class="t" style="left:52.65px;width:400px;text-align:center;top:598.50px;font-size:13px;line-height:26px;color:#212121;font-weight:normal;">5</div>
<div class="t" style="left:217.75px;width:400px;text-align:center;top:598.50px;font-size:13px;line-height:26px;color:#212121;font-weight:normal;">0</div>
<div class="t" style="left:382.85px;width:400px;text-align:center;top:598.50px;font-size:13px;line-height:26px;color:#212121;font-weight:normal;">0.00</div>
<div class="t" style="left:547.95px;width:400px;text-align:center;top:598.50px;font-size:13px;line-height:26px;color:#212121;font-weight:normal;">0</div>
<div class="t" style="left:713.05px;width:400px;text-align:center;top:598.50px;font-size:13px;line-height:26px;color:#212121;font-weight:normal;">0.00</div>
<div class="t" style="left:878.15px;width:400px;text-align:center;top:598.50px;font-size:13px;line-height:26px;color:#212121;font-weight:normal;">0.00</div>
<div class="t" style="left:1043.25px;width:400px;text-align:center;top:598.50px;font-size:13px;line-height:26px;color:#212121;font-weight:normal;">0.00</div>
<div class="t" style="left:1208.35px;width:400px;text-align:center;top:598.50px;font-size:13px;line-height:26px;color:#212121;font-weight:normal;">0.00</div>
<div style="left:5px;top:626px;width:1651px;height:1px;background:#e0e0e0;"></div>
<div class="t" style="left:-112.45px;width:400px;text-align:center;top:628.50px;font-size:13px;line-height:26px;color:#212121;font-weight:normal;">asdf_brick</div>
<div class="t" style="left:52.65px;width:400px;text-align:center;top:628.50px;font-size:13px;line-height:26px;color:#212121;font-weight:normal;">6</div>
<div class="t" style="left:217.75px;width:400px;text-align:center;top:628.50px;font-size:13px;line-height:26px;color:#212121;font-weight:normal;">0</div>
<div class="t" style="left:382.85px;width:400px;text-align:center;top:628.50px;font-size:13px;line-height:26px;color:#212121;font-weight:normal;">0.00</div>
<div class="t" style="left:547.95px;width:400px;text-align:center;top:628.50px;font-size:13px;line-height:26px;color:#212121;font-weight:normal;">0</div>
<div class="t" style="left:713.05px;width:400px;text-align:center;top:628.50px;font-size:13px;line-height:26px;color:#212121;font-weight:normal;">0.00</div>
<div class="t" style="left:878.15px;width:400px;text-align:center;top:628.50px;font-size:13px;line-height:26px;color:#212121;font-weight:normal;">0.00</div>
<div class="t" style="left:1043.25px;width:400px;text-align:center;top:628.50px;font-size:13px;line-height:26px;color:#212121;font-weight:normal;">0.00</div>
<div class="t" style="left:1208.35px;width:400px;text-align:center;top:628.50px;font-size:13px;line-height:26px;color:#212121;font-weight:normal;">0.00</div>
<div style="left:5px;top:656px;width:1651px;height:1px;background:#e0e0e0;"></div>
<div class="t" style="left:-112.45px;width:400px;text-align:center;top:658.50px;font-size:13px;line-height:26px;color:#212121;font-weight:normal;">asdf_brick</div>
<div class="t" style="left:52.65px;width:400px;text-align:center;top:658.50px;font-size:13px;line-height:26px;color:#212121;font-weight:normal;">7</div>
<div class="t" style="left:217.75px;width:400px;text-align:center;top:658.50px;font-size:13px;line-height:26px;color:#212121;font-weight:normal;">0</div>
<div class="t" style="left:382.85px;width:400px;text-align:center;top:658.50px;font-size:13px;line-height:26px;color:#212121;font-weight:normal;">0.00</div>
<div class="t" style="left:547.95px;width:400px;text-align:center;top:658.50px;font-size:13px;line-height:26px;color:#212121;font-weight:normal;">0</div>
<div class="t" style="left:713.05px;width:400px;text-align:center;top:658.50px;font-size:13px;line-height:26px;color:#212121;font-weight:normal;">0.00</div>
<div class="t" style="left:878.15px;width:400px;text-align:center;top:658.50px;font-size:13px;line-height:26px;color:#212121;font-weight:normal;">0.00</div>
<div class="t" style="left:1043.25px;width:400px;text-align:center;top:658.50px;font-size:13px;line-height:26px;color:#212121;font-weight:normal;">0.00</div>
<div class="t" style="left:1208.35px;width:400px;text-align:center;top:658.50px;font-size:13px;line-height:26px;color:#212121;font-weight:normal;">0.00</div>
<div style="left:5px;top:686px;width:1651px;height:1px;background:#e0e0e0;"></div>
<div class="t" style="left:-112.45px;width:400px;text-align:center;top:688.50px;font-size:13px;line-height:26px;color:#212121;font-weight:normal;">asdf_brick</div>
<div class="t" style="left:52.65px;width:400px;text-align:center;top:688.50px;font-size:13px;line-height:26px;color:#212121;font-weight:normal;">8</div>
<div class="t" style="left:217.75px;width:400px;text-align:center;top:688.50px;font-size:13px;line-height:26px;color:#212121;font-weight:normal;">0</div>
<div class="t" style="left:382.85px;width:400px;text-align:center;top:688.50px;font-size:13px;line-height:26px;color:#212121;font-weight:normal;">0.00</div>
<div class="t" style="left:547.95px;width:400px;text-align:center;top:688.50px;font-size:13px;line-height:26px;color:#212121;font-weight:normal;">0</div>
<div class="t" style="left:713.05px;width:400px;text-align:center;top:688.50px;font-size:13px;line-height:26px;color:#212121;font-weight:normal;">0.00</div>
<div class="t" style="left:878.15px;width:400px;text-align:center;top:688.50px;font-size:13px;line-height:26px;color:#212121;font-weight:normal;">0.00</div>
<div class="t" style="left:1043.25px;width:400px;text-align:center;top:688.50px;font-size:13px;line-height:26px;color:#212121;font-weight:normal;">0.00</div>
<div class="t" style="left:1208.35px;width:400px;text-align:center;top:688.50px;font-size:13px;line-height:26px;color:#212121;font-weight:normal;">0.00</div>
<div style="left:5px;top:716px;width:1651px;height:1px;background:#e0e0e0;"></div>
<div class="t" style="left:-112.45px;width:400px;text-align:center;top:718.50px;font-size:13px;line-height:26px;color:#212121;font-weight:normal;">asdf_brick</div>
<div class="t" style="left:52.65px;width:400px;text-align:center;top:718.50px;font-size:13px;line-height:26px;color:#212121;font-weight:normal;">9</div>
<div class="t" style="left:217.75px;width:400px;text-align:center;top:718.50px;font-size:13px;line-height:26px;color:#212121;font-weight:normal;">0</div>
<div class="t" style="left:382.85px;width:400px;text-align:center;top:718.50px;font-size:13px;line-height:26px;color:#212121;font-weight:normal;">0.00</div>
<div class="t" style="left:547.95px;width:400px;text-align:center;top:718.50px;font-size:13px;line-height:26px;color:#212121;font-weight:normal;">25</div>
<div class="t" style="left:713.05px;width:400px;text-align:center;top:718.50px;font-size:13px;line-height:26px;color:#212121;font-weight:normal;">0.00</div>
<div class="t" style="left:878.15px;width:400px;text-align:center;top:718.50px;font-size:13px;line-height:26px;color:#212121;font-weight:normal;">0.00</div>
<div class="t" style="left:1043.25px;width:400px;text-align:center;top:718.50px;font-size:13px;line-height:26px;color:#212121;font-weight:normal;">0.00</div>
<div class="t" style="left:1208.35px;width:400px;text-align:center;top:718.50px;font-size:13px;line-height:26px;color:#212121;font-weight:normal;">0.00</div>
<div class="t" style="left:1373.45px;width:400px;text-align:center;top:718.50px;font-size:13px;line-height:26px;color:#212121;font-weight:normal;">asdf_brick plan qty to 25</div>
<div style="left:5px;top:746px;width:1651px;height:1px;background:#e0e0e0;"></div>
<div class="t" style="left:-112.45px;width:400px;text-align:center;top:748.50px;font-size:13px;line-height:26px;color:#212121;font-weight:normal;">asdf_brick</div>
<div class="t" style="left:52.65px;width:400px;text-align:center;top:748.50px;font-size:13px;line-height:26px;color:#212121;font-weight:normal;">10</div>
<div class="t" style="left:217.75px;width:400px;text-align:center;top:748.50px;font-size:13px;line-height:26px;color:#212121;font-weight:normal;">0</div>
<div class="t" style="left:382.85px;width:400px;text-align:center;top:748.50px;font-size:13px;line-height:26px;color:#212121;font-weight:normal;">0.00</div>
<div class="t" style="left:547.95px;width:400px;text-align:center;top:748.50px;font-size:13px;line-height:26px;color:#212121;font-weight:normal;">0</div>
<div class="t" style="left:713.05px;width:400px;text-align:center;top:748.50px;font-size:13px;line-height:26px;color:#212121;font-weight:normal;">0.00</div>
<div class="t" style="left:878.15px;width:400px;text-align:center;top:748.50px;font-size:13px;line-height:26px;color:#212121;font-weight:normal;">0.00</div>
<div class="t" style="left:1043.25px;width:400px;text-align:center;top:748.50px;font-size:13px;line-height:26px;color:#212121;font-weight:normal;">0.00</div>
<div class="t" style="left:1208.35px;width:400px;text-align:center;top:748.50px;font-size:13px;line-height:26px;color:#212121;font-weight:normal;">0.00</div>
<div style="left:5px;top:776px;width:1651px;height:1px;background:#e0e0e0;"></div>
<div style="left:3px;top:716px;width:1654px;height:32px;box-sizing:border-box;border:3px solid #ff0000;border-radius:2px"></div>
<svg style="left:0px;top:796.3px" width="300" height="12" viewBox="0 0 300 12"><path d="M32.9 1.7999999999999998 V10.2" stroke="#c4c4c4" stroke-width="1.5"/><path d="M40.8 2.2 L35.9 6 L40.8 9.8" fill="none" stroke="#c4c4c4" stroke-width="1.4"/><path d="M78 2.2 L73.1 6 L78 9.8" fill="none" stroke="#c4c4c4" stroke-width="1.4"/></svg>
<svg style="left:443.7px;top:796.3px" width="60" height="12" viewBox="0 0 60 12"><path d="M7.5 2.1 L12.5 6 L7.5 9.9" fill="none" stroke="#3c3c3c" stroke-width="1.4"/><path d="M44.79999999999999 2.1 L49.79999999999999 6 L44.79999999999999 9.9" fill="none" stroke="#3c3c3c" stroke-width="1.4"/><path d="M52.69999999999999 1.7000000000000002 V10.3" stroke="#3c3c3c" stroke-width="1.5"/></svg>
<div style="left:101px;top:789.5999999999999px;width:26px;height:25.4px;border-radius:50%;background:#e9336f"></div>
<div class="t" style="left:-86.00px;width:400px;text-align:center;top:789.50px;font-size:13px;line-height:26px;color:#fff;font-weight:normal;">1</div>
<div class="t" style="left:-56.00px;width:400px;text-align:center;top:789.50px;font-size:13px;line-height:26px;color:#444;font-weight:normal;">2</div>
<div class="t" style="left:-26.00px;width:400px;text-align:center;top:789.50px;font-size:13px;line-height:26px;color:#444;font-weight:normal;">3</div>
<div class="t" style="left:4.00px;width:400px;text-align:center;top:789.50px;font-size:13px;line-height:26px;color:#444;font-weight:normal;">4</div>
<div class="t" style="left:34.00px;width:400px;text-align:center;top:789.50px;font-size:13px;line-height:26px;color:#444;font-weight:normal;">5</div>
<div class="t" style="left:64.00px;width:400px;text-align:center;top:789.50px;font-size:13px;line-height:26px;color:#444;font-weight:normal;">6</div>
<div class="t" style="left:94.00px;width:400px;text-align:center;top:789.50px;font-size:13px;line-height:26px;color:#444;font-weight:normal;">7</div>
<div class="t" style="left:124.00px;width:400px;text-align:center;top:789.50px;font-size:13px;line-height:26px;color:#444;font-weight:normal;">8</div>
<div class="t" style="left:154.00px;width:400px;text-align:center;top:789.50px;font-size:13px;line-height:26px;color:#444;font-weight:normal;">9</div>
<div class="t" style="left:184.00px;width:400px;text-align:center;top:789.50px;font-size:13px;line-height:26px;color:#444;font-weight:normal;">10</div>
<div class="t" style="left:215.60px;width:400px;text-align:center;top:789.50px;font-size:13px;line-height:26px;color:#444;font-weight:bold;">...</div>
<div class="t" style="left:1237.50px;width:400px;text-align:right;top:786.80px;font-size:13px;line-height:26px;color:#444;font-weight:normal;">1 of 17 pages (168 items)</div>
<div style="left:1672px;top:0px;width:9px;height:831px;background:#f1f1f1;"></div>
<div style="left:1674px;top:111px;width:7px;height:488px;background:#c1c1c1;"></div>
</body></html>
